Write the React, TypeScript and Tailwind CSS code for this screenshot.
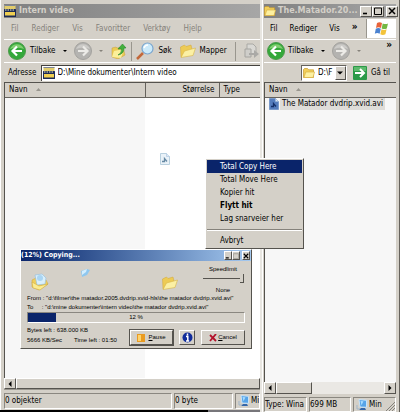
import type { ReactNode } from "react";

const raised = "border border-t-white border-l-white border-r-[#55534e] border-b-[#55534e]";
const sunken = "border border-t-[#8a8780] border-l-[#8a8780] border-r-white border-b-white";

function FilmIcon() {
  return (
    <svg className="size-3 shrink-0" viewBox="0 0 12 12">
      <rect x="0.5" y="0" width="11" height="6" fill="#e3cd6a" />
      <path d="M.5 .5h11" stroke="#7d8596" />
      <rect x="0" y="4" width="12" height="8" rx=".5" fill="#1d2b55" />
      <path d="M1 5h10" stroke="#f1eec6" strokeWidth="1" strokeDasharray="1.5 1" />
      <rect x="1" y="7" width="10" height="3.5" fill="#f0cf52" />
    </svg>
  );
}

function FolderIcon({ className = "size-3" }: { className?: string }) {
  return (
    <svg className={`${className} shrink-0`} viewBox="0 0 12 12">
      <path d="M0.5 10.5V2.5l1-1h3l1.2 1.3h4.8v7.7z" fill="#f2cf5b" stroke="#c79a2c" strokeWidth=".7" />
      <path d="M1 10.5L2.8 5h8.8L10 10.5z" fill="#fdf0a0" stroke="#d5ab3c" strokeWidth=".6" />
    </svg>
  );
}

function OpenFolderIcon({ className = "size-4" }: { className?: string }) {
  return (
    <svg className={`${className} shrink-0`} viewBox="0 0 16 16">
      <path d="M1 14L.5 4l4-2 1.5 1.5 5-1.5 1.5 6z" fill="#edcb55" stroke="#d0a63a" strokeWidth=".5" />
      <path d="M1 14.5L4.5 8l11-3-2.5 7.5z" fill="#fbf0a4" stroke="#d9b548" strokeWidth=".6" />
    </svg>
  );
}

function ArrowBall({ forward = false }: { forward?: boolean }) {
  return (
    <svg className="size-[18px] shrink-0" viewBox="0 0 18 18">
      <circle cx="9" cy="9" r="8.5" fill={forward ? "#b4b3b0" : "#34a83a"} stroke={forward ? "#a3a29e" : "#4d9a4b"} />
      <path d="M2 7a7.500 7.500 0 0 1 14 0q-7-3-14 0z" fill={forward ? "#cccbc8" : "#80cf70"} />
      <path
        d={forward ? "M4 9h9M9 4.5L13.5 9 9 13.5" : "M14 9H5M9 4.5L4.5 9 9 13.5"}
        fill="none"
        stroke={forward ? "#ecebe7" : "#fff"}
        strokeWidth="2.2"
      />
    </svg>
  );
}

function FolderUpIcon() {
  return (
    <svg className="size-4 shrink-0" viewBox="0 0 16 16">
      <path d="M1 5l4-1 1 1 6-1 2 8-7 4-6-2z" fill="#ebcb55" stroke="#c69f3b" strokeWidth=".5" />
      <path d="M1 14l2-6 10-2-3 9z" fill="#fbef9a" />
      <path d="M7 12q4-2 3.500-6H7l4.500-5L15 5h-2q0 6-6 7z" fill="#43b13c" stroke="#26862b" strokeWidth=".6" />
    </svg>
  );
}

function SearchIcon() {
  return (
    <svg className="size-[18px] shrink-0" viewBox="0 0 18 18">
      <path d="M1 17l6-6" stroke="#c2683a" strokeWidth="2.500" />
      <circle cx="11.500" cy="6.500" r="5.500" fill="#cbeafa" stroke="#7ba6ce" strokeWidth="1.200" />
      <path d="M8 6q1-3 4-3" stroke="#fff" strokeWidth="1.500" fill="none" />
    </svg>
  );
}

function MoveToIcon() {
  return (
    <svg className="size-4 shrink-0" viewBox="0 0 16 16">
      <path d="M3 1h6l3 3v7H3z" fill="#d9d8d4" stroke="#aaa9a5" />
      <path d="M1 6h6v8H1z" fill="#cfceca" stroke="#a5a4a0" />
      <path d="M5 10h5V7l5 4-5 4v-3H5z" fill="#aaa9a6" />
    </svg>
  );
}

function WindowsFlag() {
  return (
    <svg className="size-[15px]" viewBox="0 0 15 15">
      <path d="M3 2q2.500-1.500 5 0L7 7Q4.500 5.500 2 7z" fill="#e8633a" />
      <path d="M8.700 2.400q3 1.400 5.300 0l-1.200 5q-2.500 1.300-5.100 0z" fill="#74b843" />
      <path d="M1.800 7.800q2.500-1.400 5 0l-1.200 5q-2.400-1.400-4.800 0z" fill="#4b82d0" />
      <path d="M7.500 8.300q2.600 1.300 5.100 0l-1.200 5q-2.500 1.300-5.100 0z" fill="#f3c33a" />
    </svg>
  );
}

function VideoFileIcon({ faded = false }: { faded?: boolean }) {
  return (
    <svg className="h-3 w-[10px] shrink-0" viewBox="0 0 10 12">
      <path d="M.5.5h6l3 3v8h-9z" fill={faded ? "#eaf2f8" : "#557dbd"} stroke={faded ? "#b9d0df" : "#7b9bcb"} />
      <path d="M6.500.5v3h3" fill="#dce9f5" stroke="#9fb9d8" strokeWidth=".5" />
      <path d="M2 8.500h2.500V5.500L7 8.500" fill="none" stroke={faded ? "#6689a4" : "#142f68"} strokeWidth="1.300" />
    </svg>
  );
}

function ComputerIcon() {
  return (
    <svg className="size-3 shrink-0" viewBox="0 0 12 12">
      <path d="M3 .5l7.500.8v7L4 8z" fill="#57a4e8" stroke="#c9e3f7" />
      <path d="M4.500 2l3 .3-2 4z" fill="#a7dcff" />
      <path d="M5 9h4l1 2H3z" fill="#3567a9" />
      <path d="M1 6v4h3" fill="none" stroke="#9fb5c9" />
    </svg>
  );
}

function Triangle({ className }: { className: string }) {
  return (
    <svg className={`${className} shrink-0`} viewBox="0 0 6 6">
      <path d="M0 1.500h6L3 4.500z" fill="currentColor" />
    </svg>
  );
}

function SortMark() {
  return (
    <svg className="ml-2 inline h-[3px] w-[5px]" viewBox="0 0 5 3">
      <path d="M0 3L2.500 0 5 3z" fill="#99968e" />
    </svg>
  );
}

function CaptionButton({ label, small, children }: { label: string; small?: boolean; children: ReactNode }) {
  return (
    <button
      aria-label={label}
      className={`flex items-center justify-center bg-[#d4d0c8] ${raised} ${small ? "h-[9px] w-2" : "h-[11px] w-3"}`}
    >
      <svg className={small ? "size-[6px]" : "size-2"} viewBox="0 0 8 8" fill="none" stroke="#000">
        {children}
      </svg>
    </button>
  );
}

function CaptionButtons({ small }: { small?: boolean }) {
  return (
    <div className="ml-auto flex shrink-0">
      <CaptionButton label="Minimer" small={small}>
        <path d="M1 6.500h4" strokeWidth="1.600" />
      </CaptionButton>
      <CaptionButton label="Maksimer" small={small}>
        <path d="M.5 1h7M.5 1v6.500h7V1" stroke={small ? "#99968e" : "#000"} />
      </CaptionButton>
      <span className="w-[2px]" />
      <CaptionButton label="Lukk" small={small}>
        <path d="M1 1l6 6M7 1L1 7" strokeWidth="1.500" />
      </CaptionButton>
    </div>
  );
}

function ScrollButton({ left = false }: { left?: boolean }) {
  return (
    <button
      aria-label={left ? "Rull til venstre" : "Rull til høyre"}
      className={`flex w-3 shrink-0 items-center justify-center bg-[#d4d0c8] ${raised}`}
    >
      <Triangle className={left ? "size-[6px] rotate-90" : "size-[6px] -rotate-90"} />
    </button>
  );
}

function VideoWindow() {
  return (
    <section className="flex min-h-0 min-w-0 flex-1 flex-col overflow-hidden border-l border-white bg-[#d4d0c8] pt-1 pl-[3px]">
      <header className="flex h-[14px] shrink-0 items-center gap-[3px] bg-linear-to-r from-[#808080] to-[#a6a6a6] font-['DejaVu_Sans',sans-serif] font-bold text-[#d4d0c8]">
        <FilmIcon />
        <h1>Intern video</h1>
      </header>
      <nav className="flex h-[21px] shrink-0 items-center gap-[13px] pl-[7px] text-[#85827b]">
        <button>Fil</button>
        <button>Rediger</button>
        <button>Vis</button>
        <button>Favoritter</button>
        <button>Verktøy</button>
        <button>Hjelp</button>
      </nav>
      <div className="flex h-[23px] shrink-0 items-center border-t border-white pl-1">
        <button className="flex items-center gap-1">
          <ArrowBall />
          Tilbake
        </button>
        <Triangle className="ml-2 size-1" />
        <button aria-label="Fremover" className="ml-[7px]">
          <ArrowBall forward />
        </button>
        <Triangle className="ml-[7px] size-1 text-[#85827b]" />
        <button aria-label="Opp" className="ml-2">
          <FolderUpIcon />
        </button>
        <span className="mx-1 h-[19px] w-px shrink-0 bg-[#99968e]" />
        <button className="flex items-center gap-1">
          <SearchIcon />
          Søk
        </button>
        <button className="ml-2 flex items-center gap-1">
          <OpenFolderIcon />
          Mapper
        </button>
        <span className="mx-2 h-[19px] w-px shrink-0 bg-[#99968e]" />
        <button aria-label="Flytt til">
          <MoveToIcon />
        </button>
      </div>
      <div className="flex h-5 shrink-0 items-center gap-1 border-t border-white pl-1">
        <label htmlFor="address">Adresse</label>
        <div className="flex h-4 min-w-0 flex-1 items-center gap-[3px] border-t border-l border-[#44423e] bg-white pl-px">
          <FilmIcon />
          <input id="address" className="min-w-0 flex-1 outline-none" defaultValue="D:\Mine dokumenter\Intern video" />
        </div>
      </div>
      <div className="min-h-0 flex-1 border-t border-l border-[#55534e] bg-white">
        <table className="h-full w-full table-fixed border-collapse">
          <thead>
            <tr className="h-[14px] bg-[#d4d0c8] leading-3">
              <th className="w-[140px] border-r border-b border-[#66635d] p-0 pl-1 text-left font-normal">
                Navn
                <SortMark />
              </th>
              <th className="w-[74px] border-r border-b border-[#66635d] p-0 pr-1 text-right font-normal">Størrelse</th>
              <th className="border-b border-[#66635d] p-0 pl-1 text-left font-normal">Type</th>
            </tr>
          </thead>
          <tbody>
            <tr>
              <td className="bg-[#f7f7f7]" />
              <td />
              <td />
            </tr>
          </tbody>
        </table>
      </div>
      <div className="flex h-3 shrink-0 border-b border-[#99968e]">
        <ScrollButton left />
        <div className={`flex-1 ${raised}`} />
      </div>
      <footer className="flex h-5 shrink-0 gap-[2px] pt-[3px] pb-px">
        <div className={`flex min-w-0 flex-1 items-center ${sunken}`}>0 objekter</div>
        <div className={`flex w-[59px] shrink-0 items-center ${sunken}`}>0 byte</div>
        <div className={`flex w-[25px] shrink-0 items-center gap-px overflow-hidden pl-[2px] ${sunken}`}>
          <ComputerIcon />
          Min
        </div>
      </footer>
    </section>
  );
}

function MatadorWindow() {
  return (
    <section className="flex w-[138px] shrink-0 flex-col overflow-hidden border-x border-l-white border-r-[#66635d] bg-[#d4d0c8] pt-1 pr-[3px] pl-px">
      <header className="flex h-[14px] shrink-0 items-center gap-[2px] bg-linear-to-r from-[#808080] to-[#a6a6a6] font-['DejaVu_Sans',sans-serif] font-bold text-[#d4d0c8]">
        <FolderIcon />
        <h2 className="whitespace-nowrap">The.Matador.20...</h2>
        <CaptionButtons />
      </header>
      <nav className="flex h-[21px] shrink-0 items-center pl-[6px]">
        <div className="flex items-center gap-3">
          <button>Fil</button>
          <button>Rediger</button>
          <button>Vis</button>
          <button aria-label="Flere menyer" className="mb-1 text-[10px] font-bold">
            »
          </button>
        </div>
        <div className="ml-auto flex h-[19px] w-[30px] shrink-0 items-center justify-center border-l border-[#99968e] bg-white">
          <WindowsFlag />
        </div>
      </nav>
      <div className="flex h-[23px] shrink-0 items-center border-t border-white pl-[3px]">
        <button className="flex items-center gap-[3px]">
          <ArrowBall />
          Tilbake
        </button>
        <Triangle className="ml-2 size-1" />
        <button aria-label="Fremover" className="ml-[7px]">
          <ArrowBall forward />
        </button>
        <Triangle className="ml-[7px] size-1 text-[#85827b]" />
        <button aria-label="Flere knapper" className="mr-1 mb-3 ml-auto text-[10px] font-bold">
          »
        </button>
      </div>
      <div className="flex h-5 shrink-0 items-center justify-end gap-[6px] border-t border-white pr-[6px]">
        <div className="flex h-4 w-[46px] items-center border border-[#66635d] border-r-white border-b-white bg-white pl-px">
          <FolderIcon />
          <select aria-label="Adresse" className="ml-[3px] min-w-0 flex-1 appearance-none overflow-hidden outline-none">
            <option>D:\F</option>
          </select>
          <span className={`flex h-full w-[11px] shrink-0 items-center justify-center bg-[#d4d0c8] ${raised}`}>
            <Triangle className="size-[6px]" />
          </span>
        </div>
        <button className="flex items-center gap-1">
          <svg className="size-[14px]" viewBox="0 0 14 14">
            <rect width="14" height="14" rx="1" fill="#2b9948" />
            <path d="M1 1h12v4H1z" fill="#5dba6d" />
            <path d="M2 7h9M7 3l4 4-4 4" fill="none" stroke="#fff" strokeWidth="2" />
          </svg>
          Gå til
        </button>
      </div>
      <div className="min-h-0 flex-1 border-t border-l border-[#55534e] bg-[#f7f7f7]">
        <table className="w-full border-collapse">
          <thead>
            <tr className="h-[14px] bg-[#d4d0c8] leading-3">
              <th className="border-b border-[#66635d] p-0 pl-1 text-left font-normal">
                Navn
                <SortMark />
              </th>
            </tr>
          </thead>
          <tbody>
            <tr>
              <td className="p-0 pl-1">
                <div className="flex items-center gap-px whitespace-nowrap">
                  <VideoFileIcon />
                  <span className="bg-[#dedcd8] px-[2px] leading-3">The Matador dvdrip.xvid.avi</span>
                </div>
              </td>
            </tr>
          </tbody>
        </table>
      </div>
      <div className="flex h-3 shrink-0 bg-[#eae8e4]">
        <ScrollButton left />
        <div className={`w-9 bg-[#d4d0c8] ${raised}`} />
        <span className="flex-1" />
        <ScrollButton />
      </div>
      <footer className="flex h-[18px] shrink-0 gap-[2px] pt-[3px]">
        <div className={`flex w-[43px] shrink-0 items-center overflow-hidden whitespace-nowrap ${sunken}`}>Type: Wina</div>
        <div className={`flex w-[42px] shrink-0 items-center whitespace-nowrap ${sunken}`}>699 MB</div>
        <div className={`flex min-w-0 flex-1 items-center gap-px pl-[2px] ${sunken}`}>
          <ComputerIcon />
          Min
          <svg className="ml-auto size-[10px] self-end" viewBox="0 0 10 10" stroke="#85827b">
            <path d="M1 10l9-9M4 10l6-6M7 10l3-3" />
          </svg>
        </div>
      </footer>
    </section>
  );
}

function DropMenu() {
  const item = "block h-[13px] w-full pl-[13px] text-left leading-[13px] whitespace-nowrap";
  return (
    <div role="menu" className={`absolute top-[158px] left-[205px] w-[99px] bg-[#d4d0c8] p-px ${raised}`}>
      <button role="menuitem" className={`${item} bg-[#0a246a] text-white`}>
        Total Copy Here
      </button>
      <button role="menuitem" className={item}>
        Total Move Here
      </button>
      <button role="menuitem" className={item}>
        Kopier hit
      </button>
      <button role="menuitem" className={`${item} font-bold`}>
        Flytt hit
      </button>
      <button role="menuitem" className={item}>
        Lag snarveier her
      </button>
      <hr className="mt-1 mb-[3px] border-t border-b border-t-[#85827b] border-b-white" />
      <button role="menuitem" className={item}>
        Avbryt
      </button>
    </div>
  );
}

function CopyDialog() {
  return (
    <section className={`absolute top-[249px] left-5 w-[232px] bg-[#d4d0c8] font-['Liberation_Sans',sans-serif] text-[6px] leading-[9px] ${raised}`}>
      <header className="flex h-[11px] items-center bg-linear-to-r from-[#0a246a] to-[#a6caf0] pr-px font-['DejaVu_Sans_Condensed','DejaVu_Sans',sans-serif] text-[7px] font-bold text-white">
        <h2>(12%) Copying...</h2>
        <CaptionButtons small />
      </header>
      <div className="px-[6px] pb-[3px]">
        <div className="flex h-[33px] pt-1 pl-1">
          <svg className="mt-2 size-[18px]" viewBox="0 0 18 18">
            <path d="M1 7l4-2 10 2 2 4-9 6-7-3z" fill="#efcf5d" stroke="#cba43a" strokeWidth=".5" />
            <path d="M4 2l7-1 4 4-1 6-8 1z" fill="#d9effb" stroke="#8fbce0" strokeWidth=".6" />
            <circle cx="9" cy="5" r="3" fill="#a9d5f3" />
            <path d="M1 9l7 4 9-2-8 6-7-2z" fill="#fbec91" stroke="#cba43a" strokeWidth=".5" />
          </svg>
          <svg className="mt-[3px] ml-[31px] size-[10px]" viewBox="0 0 10 10">
            <path d="M1 3l6-2 3 1-3 5-5 2z" fill="#8fc7ef" />
            <path d="M2 3l5-2-1 3-4 3z" fill="#d4eefe" />
          </svg>
          <OpenFolderIcon className="mt-[10px] ml-[72px] size-4" />
          <div className="ml-auto flex w-11 flex-col items-center">
            <label htmlFor="speed">Speedlimit</label>
            <input
              id="speed"
              type="range"
              defaultValue={100}
              className="h-[9px] w-[41px] appearance-none bg-linear-to-b from-transparent from-45% via-[#55534e] via-50% to-transparent to-55% [&::-webkit-slider-thumb]:h-[9px] [&::-webkit-slider-thumb]:w-1 [&::-webkit-slider-thumb]:appearance-none [&::-webkit-slider-thumb]:border-r [&::-webkit-slider-thumb]:border-b [&::-webkit-slider-thumb]:border-[#55534e] [&::-webkit-slider-thumb]:bg-[#d4d0c8]"
            />
            <output htmlFor="speed" className="mt-[3px]">
              None
            </output>
          </div>
        </div>
        <p className="whitespace-pre">From : "d:\filmer\the matador.2005.dvdrip.xvid-hls\the matador dvdrip.xvid.avi"</p>
        <p className="whitespace-pre">To     : "d:\mine dokumenter\intern video\the matador dvdrip.xvid.avi"</p>
        <div role="progressbar" aria-label="Copying" aria-valuenow={12} className={`relative h-[11px] text-center ${sunken}`}>
          <div className="absolute inset-y-0 left-0 bg-[#0a246a]" style={{ width: `${12 + 1}%` }} />
          12 %
        </div>
        <div className="flex items-end pt-[3px]">
          <div>
            <p>Bytes left : 638.000 KB</p>
            <p className="mt-px flex gap-3">
              <span>5666 KB/Sec</span>
              <span>Time left : 01:50</span>
            </p>
          </div>
          <div className="ml-auto flex gap-[6px]">
            <button className="flex h-[15px] w-[43px] items-center justify-center gap-[3px] border border-[#55534e] border-t-white border-l-white outline outline-[#55534e]">
              <svg className="size-2" viewBox="0 0 8 8">
                <rect width="8" height="8" fill="#e99b22" />
                <path d="M1 1h3v6H1z" fill="#ffd36c" />
              </svg>
              <span>
                <u>P</u>ause
              </span>
            </button>
            <button aria-label="Info" className={`flex h-[15px] w-4 items-center justify-center ${raised}`}>
              <svg className="size-[11px]" viewBox="0 0 11 11">
                <circle cx="5.500" cy="5.500" r="5" fill="#102c9b" />
                <path d="M5.500 1.500v2M4 4.500h1.800V9M4 9h3.200" stroke="#fff" strokeWidth="1.500" fill="none" />
              </svg>
            </button>
            <button className={`flex h-[15px] w-11 items-center justify-center gap-px ${raised}`}>
              <svg className="size-2" viewBox="0 0 8 8" stroke="#b3122b" strokeWidth="1.800">
                <path d="M1 1l6 6M7 0L1 7" />
              </svg>
              <span>
                <u>C</u>ancel
              </span>
            </button>
          </div>
        </div>
      </div>
    </section>
  );
}

export default function App() {
  return (
    <main className="relative flex h-screen overflow-hidden bg-[#d4d0c8] font-['DejaVu_Sans_Condensed','DejaVu_Sans',sans-serif] text-[8px] leading-[10px] text-black">
      <div className="flex min-w-0 flex-1 flex-col">
        <VideoWindow />
        <div className="flex h-[2px] shrink-0 bg-[#77767a]">
          <span className="w-4/5 bg-black" />
        </div>
      </div>
      <span className="w-[2px] shrink-0 bg-[#e8e6e1]" />
      <MatadorWindow />
      <div className="absolute top-[153px] left-[160px]">
        <VideoFileIcon faded />
      </div>
      <DropMenu />
      <CopyDialog />
    </main>
  );
}
